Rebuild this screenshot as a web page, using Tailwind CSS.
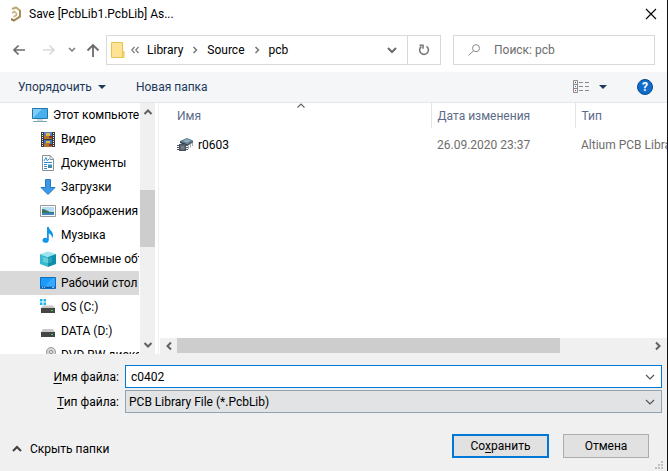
<!DOCTYPE html>
<html lang="ru">
<head>
<meta charset="utf-8">
<title>Save As</title>
<script src="https://cdn.jsdelivr.net/npm/@tailwindcss/browser@4"></script>
</head>
<body class="h-screen overflow-hidden bg-white font-['Roboto','Noto_Sans',sans-serif] text-xs text-black">
<div class="flex h-full flex-col border-r border-[#111]">

  <header class="flex h-7 shrink-0 items-center pl-2.5 pr-2">
    <svg class="h-4 w-3 shrink-0" viewBox="0 0 12 16" fill="none" aria-hidden="true">
      <path d="M2 3 L6 1.500 L10 4.500 V10.500 L4 14.500 L1.500 13" stroke="#bfa873" stroke-width="2"/>
      <path d="M10 4.500 V10.500 L4 14.500" stroke="#a58d58" stroke-width="2"/>
      <path d="M2 7 L4.500 5.500 L6.500 7.500 V9 L3.500 11" stroke="#c9b584" stroke-width="1.600"/>
      <path d="M1 12 L4 14 V15.500 L1 14 Z" fill="#857048"/>
    </svg>
    <h1 class="ml-[7px] flex-1 truncate">Save [PcbLib1.PcbLib] As...</h1>
    <button type="button" aria-label="Закрыть" class="flex h-7 w-4 items-center justify-center">
      <svg class="h-3 w-3" viewBox="0 0 12 12" fill="none" stroke="#000" stroke-width="1.100"><path d="M1 1 L11 11 M11 1 L1 11"/></svg>
    </button>
  </header>

  <nav class="flex h-11 shrink-0 items-center pl-3 pr-3" aria-label="Путь">
    <button type="button" aria-label="Назад" class="w-3.5"><svg class="h-3.5 w-3.5" viewBox="0 0 14 14" fill="none" stroke="#6b6b6b" stroke-width="1.700"><path d="M13 7 H2 M6.500 2.500 L2 7 L6.500 11.500"/></svg></button>
    <button type="button" aria-label="Вперёд" class="ml-4 w-3.5"><svg class="h-3.5 w-3.5" viewBox="0 0 14 14" fill="none" stroke="#dadada" stroke-width="1.700"><path d="M1 7 H12 M7.500 2.500 L12 7 L7.500 11.500"/></svg></button>
    <button type="button" aria-label="Последние расположения" class="ml-3 w-2"><svg class="h-2 w-2" viewBox="0 0 8 8" fill="none" stroke="#7a7a7a" stroke-width="1.500"><path d="M1 2 L4 5 L7 2"/></svg></button>
    <button type="button" aria-label="Вверх" class="ml-2.5 w-3.5"><svg class="h-3.5 w-3.5" viewBox="0 0 14 14" fill="none" stroke="#6b6b6b" stroke-width="1.800"><path d="M7 14 V2.500 M1.500 7.500 L7 2 L12.500 7.500"/></svg></button>
    <div class="ml-1.5 flex h-[30px] min-w-0 flex-1 border border-[#d9d9d9]">
      <div class="flex min-w-0 flex-1 items-center pl-1">
        <svg class="h-4 w-3.5 shrink-0" viewBox="0 0 14 16" aria-hidden="true"><path d="M.5 .5 H11.500 V9.500 H13 V15.500 H.5 Z" fill="#ffe394" stroke="#e8c24c"/><path d="M11.500 9.500 V15" stroke="#e8c24c"/></svg>
        <svg class="ml-1.5 h-2 w-2 shrink-0" viewBox="0 0 8 8" fill="none" stroke="#777" stroke-width="1.200" aria-hidden="true"><path d="M3.500 1 L.8 4 L3.500 7 M7.500 1 L4.800 4 L7.500 7"/></svg>
        <a href="#library" class="ml-2">Library</a>
        <svg class="ml-2 h-2 w-2 shrink-0" viewBox="0 0 8 8" fill="none" stroke="#777" stroke-width="1.500" aria-hidden="true"><path d="M2.500 1 L5.500 4 L2.500 7"/></svg>
        <a href="#source" class="ml-2">Source</a>
        <svg class="ml-2 h-2 w-2 shrink-0" viewBox="0 0 8 8" fill="none" stroke="#777" stroke-width="1.500" aria-hidden="true"><path d="M2.500 1 L5.500 4 L2.500 7"/></svg>
        <a href="#pcb" class="ml-2 flex-1">pcb</a>
        <button type="button" aria-label="Предыдущие расположения" class="mr-2.5 w-2.5"><svg class="h-2.5 w-2.5" viewBox="0 0 10 10" fill="none" stroke="#6b6b6b" stroke-width="2"><path d="M1 3 L5 7 L9 3"/></svg></button>
      </div>
      <button type="button" aria-label="Обновить" class="flex w-[33px] items-center justify-center border-l border-[#d9d9d9]">
        <svg class="h-3 w-3" viewBox="0 0 12 12" fill="none" stroke="#7a7a7a" stroke-width="1.600"><path d="M8.500 2.300 A4.400 4.400 0 1 1 3.300 2.500"/><path d="M1.500 1.200 H5 V4.800"/></svg>
      </button>
    </div>
    <label class="ml-3 flex h-[30px] w-[202px] shrink-0 items-center border border-[#d9d9d9] pl-3.5">
      <svg class="h-3 w-3 shrink-0" viewBox="0 0 12 12" fill="none" stroke="#8a8a8a"><circle cx="8" cy="4.200" r="3.500"/><path d="M5.500 6.800 L.5 11.500"/></svg>
      <input type="search" aria-label="Поиск" placeholder="Поиск: pcb" class="ml-3.5 min-w-0 flex-1 outline-none placeholder:text-[#6d6d6d]">
    </label>
  </nav>

  <div class="flex h-[31px] shrink-0 items-center border-b border-[#e5e6e8] bg-[#f4f6f8] pl-[18px] pr-3.5 text-[#1e395b]" role="toolbar" aria-label="Действия">
    <button type="button" class="flex items-center gap-1.5">Упорядочить
      <svg class="h-2 w-2" viewBox="0 0 8 8" fill="#1e395b"><path d="M0 2 H8 L4 6 Z"/></svg>
    </button>
    <button type="button" class="ml-[30px]">Новая папка</button>
    <button type="button" aria-label="Изменить представление" class="ml-auto flex items-center gap-2.5">
      <svg class="h-3.5 w-4" viewBox="0 0 16 14" fill="none" stroke="#8b8b8b"><path d="M.5 .5 H4.500 V12.500 H.5 Z M.5 4.500 H4.500 M.5 8.500 H4.500"/><path d="M6 2.500 H10 M12 2.500 H16 M6 6.500 H10 M12 6.500 H16 M6 10.500 H10 M12 10.500 H16"/><path d="M2 2.500 H3" stroke="#444"/><path d="M2 6.500 H3" stroke="#2a8ad4"/><path d="M2 10.500 H3" stroke="#c33"/></svg>
      <svg class="h-2 w-2" viewBox="0 0 8 8" fill="#1e395b"><path d="M0 2 H8 L4 6 Z"/></svg>
    </button>
    <button type="button" aria-label="Справка" class="ml-[30px] flex h-4 w-4 items-center justify-center rounded-full border border-[#0a4a8c] bg-[#0f6ccb] text-xs font-bold leading-none text-white">?</button>
  </div>

  <main class="flex min-h-0 flex-1">
    <ul class="w-[139px] shrink-0 overflow-hidden whitespace-nowrap">
      <li><a href="#pc" class="flex h-6 items-center gap-[5px] pl-8">
        <svg class="h-4 w-4 shrink-0" viewBox="0 0 16 16"><path d="M.5 1.500 H15.500 V11.500 H.5 Z" fill="#49b0ee" stroke="#2475a8"/><path d="M1 11 L10 2 H1 Z" fill="#7fcdf8"/><path d="M5 12 H11 V14 H5 Z" fill="#d5dde3"/><path d="M1 14.500 H15" stroke="#7ba3ba"/></svg>Этот компьютер</a></li>
      <li><a href="#video" class="flex h-6 items-center gap-[5px] pl-10">
        <svg class="h-4 w-4 shrink-0" viewBox="0 0 16 16"><path d="M1 1 H15 V16 H1 Z" fill="#3a3a3a"/><path d="M2.500 2 V16 M13.500 2 V16" stroke="#eee" stroke-dasharray="1 1"/><path d="M4 1 H12 V8 H4 Z" fill="#4d7fd0"/><path d="M4 9 H12 V16 H4 Z" fill="#3f72c4"/><path d="M4 5 L8 3 L12 6 V8 H4 Z M4 13 L7 11 L12 14 V16 H4 Z" fill="#b0752e"/><path d="M6 2 H10 V5 H6 Z M6 10 H10 V12 H6 Z" fill="#e4b93a"/><path d="M9 5 H12 V7 H9 Z M9 13 H12 V15 H9 Z" fill="#8c2f2f"/></svg>Видео</a></li>
      <li><a href="#documents" class="flex h-6 items-center gap-[5px] pl-10">
        <svg class="h-4 w-4 shrink-0" viewBox="0 0 16 16" fill="none"><path d="M2.500 .5 H10 L13.500 4 V15.500 H2.500 Z" fill="#fff" stroke="#8a8f94"/><path d="M10 .5 V4.500 H13.500" stroke="#8a8f94"/><path d="M4 6 L6 2.500 L7.500 6 M8 4.500 H9 M4 7.500 H12 M4 9.500 H7 M4 11.500 H7 M4 13.500 H7" stroke="#2d8fd5"/><path d="M8 9 H12 V13 H8 Z" fill="#4389a8"/><path d="M8 9 H12 V10 H8 Z" fill="#9ccbea"/></svg>Документы</a></li>
      <li><a href="#downloads" class="flex h-6 items-center gap-[5px] pl-10">
        <svg class="h-4 w-4 shrink-0" viewBox="0 0 16 16"><path d="M5.500 .5 H10.500 V8.500 H15 L8 15.500 L1 8.500 H5.500 Z" fill="#3b97e8" stroke="#2a78bf"/></svg>Загрузки</a></li>
      <li><a href="#pictures" class="flex h-6 items-center gap-[5px] pl-10">
        <svg class="h-4 w-4 shrink-0" viewBox="0 0 16 16"><path d="M.5 2.500 H15.500 V13.500 H.5 Z" fill="#fff" stroke="#999"/><path d="M2 4 H14 V12 H2 Z" fill="#b5def5"/><path d="M2 6 L5 6.500 L10 9 L14 9 V10 H2 Z" fill="#3c7461"/><path d="M2 10 H14 V12 H2 Z" fill="#3d87bd"/></svg>Изображения</a></li>
      <li><a href="#music" class="flex h-6 items-center gap-[5px] pl-10">
        <svg class="h-4 w-4 shrink-0" viewBox="0 0 16 16"><path d="M7 0 H8.800 C9 3 13 4 13 8 C13 9.500 12.500 10.500 12 11.500 C12 8 10.500 7 8.800 6.500 V13 C8.800 17 2.500 16.500 2.500 13.300 C2.500 11 5.500 10.300 7 11.300 Z" fill="#1296ec"/></svg>Музыка</a></li>
      <li><a href="#objects" class="flex h-6 items-center gap-[5px] pl-10">
        <svg class="h-4 w-4 shrink-0" viewBox="0 0 16 16"><path d="M0 3 L8 6 V16 L0 13 Z" fill="#37b9cf"/><path d="M0 3 L8 .5 L16 3 L8 6 Z" fill="#9be5ef"/><path d="M3 6 L8 7.500 V12 L3 11 Z" fill="#67cedc"/><path d="M8 6 L16 3 V13 L8 16 Z" fill="#0c8fa8"/><path d="M8 7 L12 6 V11 L8 12.500 Z" fill="#2aa5bc"/></svg>Объемные объекты</a></li>
      <li><a href="#desktop" aria-current="true" class="flex h-6 items-center gap-[5px] bg-[#d9d9d9] pl-10">
        <svg class="h-4 w-4 shrink-0" viewBox="0 0 16 16"><path d="M.5 2.500 H15.500 V13.500 H.5 Z" fill="#1a9bfc" stroke="#0d6fc0"/><path d="M1 11.500 H15 V13 H1 Z" fill="#0a5ea8"/><path d="M2 12.300 H3 M4 12.300 H5 M12 12.300 H14" stroke="#b7e0ff"/><path d="M5 11.500 L12 3 H15 V11.500 Z" fill="#35a9ff"/></svg>Рабочий стол</a></li>
      <li><a href="#c" class="flex h-6 items-center gap-[5px] pl-10">
        <svg class="h-4 w-4 shrink-0" viewBox="0 0 16 16"><path d="M0 0 H2.500 V2.500 H0 Z M3.500 0 H6 V2.500 H3.500 Z M0 3.500 H2.500 V6 H0 Z M3.500 3.500 H6 V6 H3.500 Z" fill="#19b5ea"/><path d="M3 6.500 H13 L15 9 H1 Z" fill="#c9c9c9"/><path d="M1 9 H15 V14 H1 Z" fill="#454545"/><path d="M11 11.500 H13" stroke="#39e04a"/></svg>OS (C:)</a></li>
      <li><a href="#d" class="flex h-6 items-center gap-[5px] pl-10">
        <svg class="h-4 w-4 shrink-0" viewBox="0 0 16 16"><path d="M3 6 H13 L15 9 H1 Z" fill="#c9c9c9"/><path d="M1 9 H15 V14 H1 Z" fill="#454545"/><path d="M11 11.500 H13" stroke="#39e04a"/></svg>DATA (D:)</a></li>
      <li><a href="#dvd" class="flex h-6 items-center gap-[5px] pl-10">
        <svg class="h-4 w-4 shrink-0" viewBox="0 0 16 16"><circle cx="11" cy="5" r="4.500" fill="#d6d6d6" stroke="#9a9a9a"/><circle cx="11" cy="5" r="1.500" fill="#fff" stroke="#888"/><path d="M1 10 H15 V14 H1 Z" fill="#454545"/></svg>DVD RW дисковод</a></li>
    </ul>
    <div class="ml-px flex w-[15px] shrink-0 flex-col bg-[#f0f0f0]" aria-hidden="true">
      <svg class="mx-auto mt-1 h-2.5 w-2.5 shrink-0" viewBox="0 0 10 10" fill="none" stroke="#606060" stroke-width="2"><path d="M1.500 7 L5 3.500 L8.500 7"/></svg>
      <div class="flex-[73]"></div>
      <div class="flex-[57] bg-[#cdcdcd]"></div>
      <div class="flex-[93]"></div>
      <svg class="mx-auto mb-1 h-2.5 w-2.5 shrink-0" viewBox="0 0 10 10" fill="none" stroke="#606060" stroke-width="2"><path d="M1.500 3 L5 6.500 L8.500 3"/></svg>
    </div>
    <div class="ml-[3px] w-px shrink-0 bg-[#f0f0f0]"></div>
    <section class="ml-px flex min-w-0 flex-1 flex-col">
      <div class="min-h-0 flex-1 overflow-hidden pl-3">
        <table class="w-full table-fixed border-collapse whitespace-nowrap text-left">
          <thead>
            <tr class="h-[25px] text-[#5c6b88]">
              <th scope="col" class="relative p-0 pl-[5px] font-normal">Имя
                <svg class="absolute inset-x-0 top-0 mx-auto h-1.5 w-2.5" viewBox="0 0 10 6" fill="none" stroke="#606060" stroke-width="1.100"><path d="M1.500 4.500 L5 1 L8.500 4.500"/></svg>
              </th>
              <th scope="col" class="w-36 border-l border-[#e3e3e3] p-0 pl-1.5 font-normal">Дата изменения</th>
              <th scope="col" class="w-[92px] border-l border-[#e3e3e3] p-0 pl-1.5 font-normal">Тип</th>
            </tr>
          </thead>
          <tbody>
            <tr class="h-[34px] text-[#6d6d6d]">
              <td class="p-0 pl-[5px] text-black"><a href="#r0603" class="flex items-center gap-[5px]">
                <svg class="h-4 w-4" viewBox="0 0 16 16"><path d="M3 4 L10 1 L16 3.500 L10 7 Z" fill="#5b7688"/><path d="M5.500 4 L10 2 L14 3.500 L10 5.800 Z" fill="#8fb0c4"/><path d="M3 4 L10 7 V9 L3 6 Z" fill="#34414d"/><path d="M10 7 L16 3.500 V5.500 L10 9 Z" fill="#48586a"/><path d="M11.500 8.500 V12 M13.500 7 V10.500 M15.500 6 V9" stroke="#a3acb3"/><path d="M2 7 H9 V14 H2 Z" fill="#4c5661"/><path d="M3.500 8.500 H7.500 V12.500 H3.500 Z" fill="#727e89"/><path d="M0 8.500 H2 M0 10.500 H2 M0 12.500 H2 M9 8.500 H11 M9 10.500 H11 M9 12.500 H11" stroke="#4c5661"/></svg>r0603</a></td>
              <td class="p-0 pl-1.5">26.09.2020 23:37</td>
              <td class="overflow-hidden p-0 pl-1.5">Altium PCB Library</td>
            </tr>
          </tbody>
        </table>
      </div>
      <div class="flex h-4 shrink-0 items-stretch bg-[#f0f0f0] pb-px" aria-hidden="true">
        <svg class="my-auto ml-1 mr-[3px] h-2.5 w-2.5 shrink-0" viewBox="0 0 10 10" fill="none" stroke="#606060" stroke-width="2"><path d="M7 1.500 L3.500 5 L7 8.500"/></svg>
        <div class="flex-[383] bg-[#cdcdcd]"></div>
        <div class="flex-[90]"></div>
        <svg class="my-auto ml-[3px] mr-1 h-2.5 w-2.5 shrink-0" viewBox="0 0 10 10" fill="none" stroke="#606060" stroke-width="2"><path d="M3 1.500 L6.500 5 L3 8.500"/></svg>
      </div>
    </section>
  </main>

  <form class="relative shrink-0 bg-[#f0f0f0] pt-[11px]">
    <div class="grid grid-cols-[119px_1fr] items-center gap-x-1.5 gap-y-0.5 pr-[5px]">
      <label for="name" class="text-right"><u class="underline-offset-2">И</u>мя файла:</label>
      <div class="flex h-[23px] border border-[#0078d7] bg-white">
        <input id="name" type="text" value="c0402" class="min-w-0 flex-1 pl-[5px] outline-none">
        <button type="button" aria-label="Показать список" class="flex w-4 items-center"><svg class="h-2.5 w-2.5" viewBox="0 0 10 10" fill="none" stroke="#555" stroke-width="1.200"><path d="M1 3 L5 7 L9 3"/></svg></button>
      </div>
      <label for="type" class="text-right"><u class="underline-offset-2">Т</u>ип файла:</label>
      <div class="relative flex h-[23px] border border-[#8fa3b2] bg-[#e1e3e5]">
        <select id="type" class="min-w-0 flex-1 appearance-none pl-[3px] pr-5 outline-none"><option>PCB Library File (*.PcbLib)</option></select>
        <svg class="pointer-events-none absolute right-1.5 top-1.5 h-2.5 w-2.5" viewBox="0 0 10 10" fill="none" stroke="#555" stroke-width="1.200"><path d="M1 3 L5 7 L9 3"/></svg>
      </div>
    </div>
    <div class="mt-[21px] flex items-center gap-3.5 pb-[13px] pl-3 pr-[18px]">
      <button type="button" class="mr-auto mt-[5px] flex items-center gap-2">
        <svg class="h-2.5 w-2.5" viewBox="0 0 10 10" fill="none" stroke="#404040" stroke-width="2"><path d="M1 7 L5 3 L9 7"/></svg>Скрыть папки</button>
      <button type="submit" class="h-6 w-[97px] border-2 border-[#0078d7] bg-[#e1e1e1]">Со<u class="underline-offset-2">х</u>ранить</button>
      <button type="button" class="h-6 w-[86px] border border-[#adadad] bg-[#e1e1e1]">Отмена</button>
    </div>
    <svg class="absolute bottom-0.5 right-1 h-2 w-2" viewBox="0 0 8 8" fill="#bfbfbf" aria-hidden="true"><path d="M6 0 H8 V2 H6 Z M3 3 H5 V5 H3 Z M6 3 H8 V5 H6 Z M0 6 H2 V8 H0 Z M3 6 H5 V8 H3 Z M6 6 H8 V8 H6 Z"/></svg>
  </form>
</div>
</body>
</html>
